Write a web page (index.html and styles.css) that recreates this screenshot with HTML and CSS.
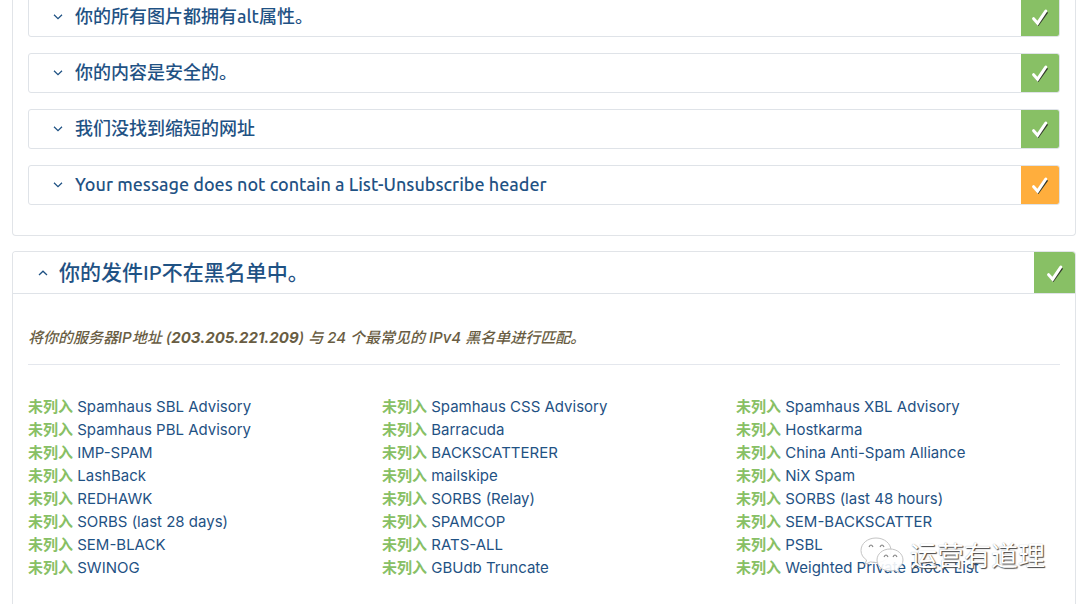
FILE: index.html
```html
<!DOCTYPE html>
<html lang="zh-CN">
<head>
<meta charset="utf-8">
<title>邮件检测结果</title>
<link rel="stylesheet" href="styles.css">
</head>
<body>
<svg class="symbols" aria-hidden="true">
  <symbol id="down" viewBox="0 0 10 6"><path d="M1 .8 5 4.6 9 .8"/></symbol>
  <symbol id="up" viewBox="0 0 10 6"><path d="M1 5 5 1.2 9 5"/></symbol>
  <symbol id="tick" viewBox="0 0 18 18">
    <path class="tick-shadow" d="M3.400 11.800 7.300 16.400 16.200 4"/>
    <path class="tick-line" d="M2.600 10.700 6.600 15.200 14.800 3"/>
  </symbol>
</svg>
<main class="page">
  <section class="card card-continued">
    <div class="tests">
      <button class="test" type="button" aria-expanded="false"><svg class="chevron"><use href="#down"/></svg><span class="label">你的所有图片都拥有alt属性。</span><span class="status"><svg class="tick"><use href="#tick"/></svg></span></button>
      <button class="test" type="button" aria-expanded="false"><svg class="chevron"><use href="#down"/></svg><span class="label">你的内容是安全的。</span><span class="status"><svg class="tick"><use href="#tick"/></svg></span></button>
      <button class="test" type="button" aria-expanded="false"><svg class="chevron"><use href="#down"/></svg><span class="label">我们没找到缩短的网址</span><span class="status"><svg class="tick"><use href="#tick"/></svg></span></button>
      <button class="test" type="button" aria-expanded="false"><svg class="chevron"><use href="#down"/></svg><span class="label">Your message does not contain a List-Unsubscribe header</span><span class="status status-warning"><svg class="tick"><use href="#tick"/></svg></span></button>
    </div>
  </section>
  <section class="card card-open">
    <button class="test test-main" type="button" aria-expanded="true"><svg class="chevron"><use href="#up"/></svg><span class="label">你的发件IP不在黑名单中。</span><span class="status"><svg class="tick"><use href="#tick"/></svg></span></button>
    <div class="body">
      <p class="about">将你的服务器IP地址 (<b>203.205.221.209</b>) 与 24 个最常见的 IPv4 黑名单进行匹配。</p>
      <div class="columns">
        <ul class="lists">
          <li><b class="ok">未列入</b> <a href="#">Spamhaus SBL Advisory</a></li>
          <li><b class="ok">未列入</b> <a href="#">Spamhaus PBL Advisory</a></li>
          <li><b class="ok">未列入</b> <a href="#">IMP-SPAM</a></li>
          <li><b class="ok">未列入</b> <a href="#">LashBack</a></li>
          <li><b class="ok">未列入</b> <a href="#">REDHAWK</a></li>
          <li><b class="ok">未列入</b> <a href="#">SORBS (last 28 days)</a></li>
          <li><b class="ok">未列入</b> <a href="#">SEM-BLACK</a></li>
          <li><b class="ok">未列入</b> <a href="#">SWINOG</a></li>
        </ul>
        <ul class="lists">
          <li><b class="ok">未列入</b> <a href="#">Spamhaus CSS Advisory</a></li>
          <li><b class="ok">未列入</b> <a href="#">Barracuda</a></li>
          <li><b class="ok">未列入</b> <a href="#">BACKSCATTERER</a></li>
          <li><b class="ok">未列入</b> <a href="#">mailskipe</a></li>
          <li><b class="ok">未列入</b> <a href="#">SORBS (Relay)</a></li>
          <li><b class="ok">未列入</b> <a href="#">SPAMCOP</a></li>
          <li><b class="ok">未列入</b> <a href="#">RATS-ALL</a></li>
          <li><b class="ok">未列入</b> <a href="#">GBUdb Truncate</a></li>
        </ul>
        <ul class="lists">
          <li><b class="ok">未列入</b> <a href="#">Spamhaus XBL Advisory</a></li>
          <li><b class="ok">未列入</b> <a href="#">Hostkarma</a></li>
          <li><b class="ok">未列入</b> <a href="#">China Anti-Spam Alliance</a></li>
          <li><b class="ok">未列入</b> <a href="#">NiX Spam</a></li>
          <li><b class="ok">未列入</b> <a href="#">SORBS (last 48 hours)</a></li>
          <li><b class="ok">未列入</b> <a href="#">SEM-BACKSCATTER</a></li>
          <li><b class="ok">未列入</b> <a href="#">PSBL</a></li>
          <li><b class="ok">未列入</b> <a href="#">Weighted Private Block List</a></li>
        </ul>
      </div>
    </div>
  </section>
</main>
<div class="watermark">
  <svg class="wechat" viewBox="0 0 44 36" aria-hidden="true">
    <path class="bubble" d="M16 1C7.500 1 1 6.500 1 13.500c0 4 2.200 7.300 5.600 9.500L5 27.500l5.500-2.700c1.800.5 3.600.8 5.500.8 8.500 0 15-5.300 15-12.100S24.500 1 16 1z"/>
    <path class="bubble" d="M30 12c-7.300 0-13 4.900-13 11s5.700 11 13 11c1.600 0 3.200-.3 4.600-.7l4.400 2.200-1.200-3.800c3.200-2.100 5.200-5.200 5.200-8.700 0-6.100-5.700-11-13-11z"/>
    <path class="eye" d="M9 10q2-4 4 0M20 10q2-4 4 0M24 20q2-4 4 0M33 20q2-4 4 0"/>
  </svg>
  <span>运营有道理</span>
</div>
</body>
</html>
```
FILE: styles.css
```css
* { box-sizing: border-box; }
html, body { height: 100%; }
body {
  margin: 0;
  position: relative;
  overflow: hidden;
  background: #fff;
  color: #695d43;
  font: 15px/23px Inter, "Noto Sans CJK SC", sans-serif;
}
.symbols { position: absolute; width: 0; height: 0; }
.page { display: flex; flex-direction: column; gap: 15px; padding: 0 4px 0 12px; }
.card { border: 1px solid #e1e4e8; border-radius: 4px; }
.card-continued { border-top: 0; border-radius: 0 0 4px 4px; padding: 0 15px 30px; }
.tests { display: flex; flex-direction: column; gap: 16px; margin-top: -3px; }
.test {
  display: flex;
  align-items: stretch;
  width: 100%;
  min-height: 40px;
  padding: 0 0 0 24px;
  border: 1px solid #dfe3e8;
  border-radius: 3px;
  background: #fff;
  color: #1f5284;
  font: 500 18px/36px Ubuntu, "Noto Sans", "Noto Sans CJK SC", sans-serif;
  text-align: left;
  overflow: hidden;
}
.chevron {
  flex: none;
  align-self: center;
  width: 10px;
  height: 6px;
  margin-right: 12px;
  fill: none;
  stroke: #1f5284;
  stroke-width: 1.300;
}
.label { flex: 1; }
.status { display: flex; align-items: center; justify-content: center; width: 38px; background: #88c065; }
.status-warning { background: #ffae3d; }
.tick { width: 18px; height: 18px; fill: none; }
.tick-shadow { stroke: #333a2c; stroke-width: 2.200; }
.tick-line { stroke: #fff; stroke-width: 3; stroke-linecap: round; }
.test-main { min-height: 42px; padding-left: 25px; border-width: 0 0 1px; border-radius: 3px 3px 0 0; font-size: 21px; line-height: 40px; }
.test-main .chevron { margin-right: 11px; }
.test-main .status { width: 41px; }
.card-open { border-bottom: 0; border-radius: 4px 4px 0 0; }
.body { padding: 32px 15px 40px; }
.about { margin: 0; padding-bottom: 15px; border-bottom: 1px solid #e4e7ed; font-style: italic; font-weight: 500; }
.columns { display: grid; grid-template-columns: repeat(3, 1fr); column-gap: 30px; padding-top: 30px; }
.lists { margin: 0; padding: 0; list-style: none; }
.lists a { color: #1f5284; text-decoration: none; }
.ok { color: #88c065; font-weight: 700; }
.watermark {
  position: absolute;
  right: 35px;
  bottom: 31px;
  display: flex;
  align-items: center;
  gap: 6px;
  color: #fff;
  font: 27px/36px "Noto Sans CJK SC", sans-serif;
  text-shadow: 1px 1px 1px #444, 0 0 1px #aaa;
}
.wechat { width: 44px; height: 36px; }
.bubble { fill: #fff; fill-opacity: .9; stroke: #c4c4c4; stroke-width: 1; }
.eye { fill: none; stroke: #888; stroke-width: 1.200; }
```
